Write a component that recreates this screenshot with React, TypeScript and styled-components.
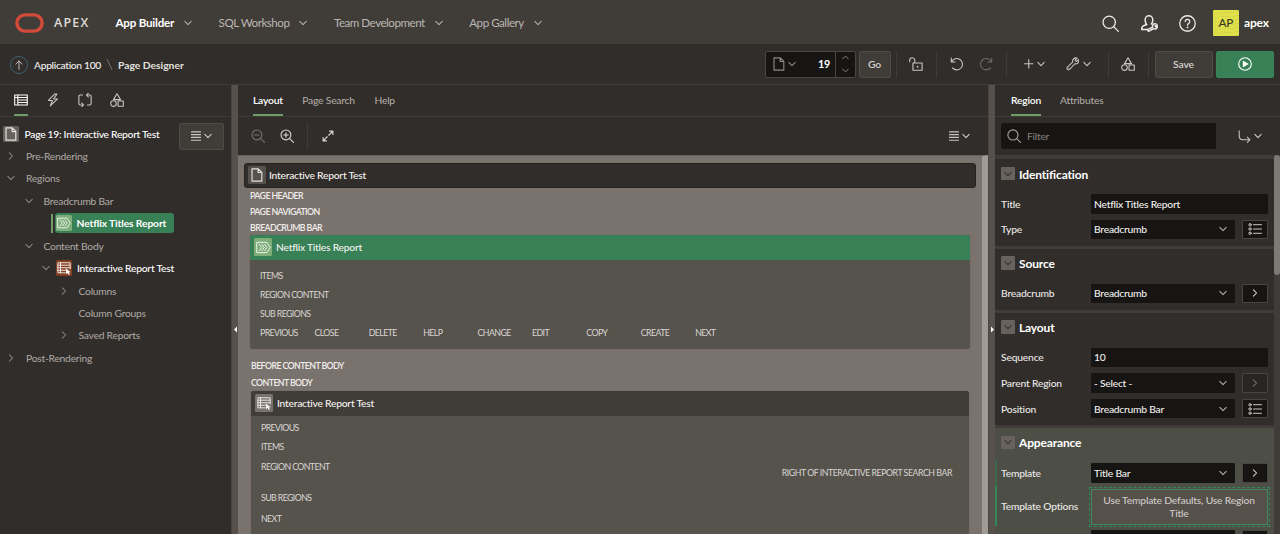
import React from 'react';
import styled, { createGlobalStyle } from 'styled-components';

const GlobalStyle = createGlobalStyle`
  * { box-sizing: border-box; }
  body {
    margin: 0;
    background: #312d2a;
    color: #c9c5c1;
    font-family: Lato, "Open Sans", "Noto Sans", sans-serif;
    font-size: 10.3px;
    letter-spacing: -0.24px;
    line-height: 16px;
    white-space: nowrap;
  }
  svg { display: block; flex: none; }
`;

/* ---------- icons ---------- */

const Glyph = styled.svg<{ $color?: string; $w?: number }>`
  fill: none;
  stroke: ${p => p.$color ?? '#c9c5c1'};
  stroke-width: ${p => p.$w ?? 1.25};
  stroke-linecap: round;
  stroke-linejoin: round;
  .solid { fill: ${p => p.$color ?? '#c9c5c1'}; stroke: none; }
`;

type IconProps = { size?: number; color?: string; w?: number };

const Icon = ({ size = 14, color, w, children }: IconProps & { children: React.ReactNode }) => (
  <Glyph width={size} height={size} viewBox="0 0 16 16" $color={color} $w={w}>
    {children}
  </Glyph>
);

const Chevron = ({ dir = 'down', size = 8, color = '#b3afaa' }: IconProps & { dir?: 'down' | 'up' | 'right' }) => (
  <Glyph width={size} height={size} viewBox="0 0 8 8" $color={color} $w={1.05}>
    <path d={dir === 'down' ? 'M.8 2.4 4 5.6 7.2 2.4' : dir === 'up' ? 'M.8 5.6 4 2.4 7.2 5.6' : 'M2.4.8 5.6 4 2.4 7.2'} />
  </Glyph>
);

const SearchIcon = (p: IconProps) => (
  <Icon {...p}><circle cx="6.8" cy="6.8" r="5.8" /><path d="m11 11 4.4 4.4" /></Icon>
);
const ZoomIcon = ({ plus, ...p }: IconProps & { plus?: boolean }) => (
  <Icon {...p}>
    <circle cx="6.8" cy="6.8" r="5.6" /><path d="m11 11 4.4 4.4M4.2 6.8h5.2" />{plus && <path d="M6.8 4.2v5.2" />}
  </Icon>
);
const UserWrenchIcon = (p: IconProps) => (
  <Icon {...p}>
    <path d="M5.3 9C4.2 8 3.9 6.2 3.9 4.7a3.6 3.9 0 0 1 7.2 0c0 1.4-.3 2.8-1.3 3.7" />
    <path d="M5.3 9 1.9 10.4C1 10.9.6 11.8.6 13.6h5.8" />
    <path d="M15.2 9.600a2.300 2.300 0 0 0-4.200 1.900l-4.300 2c-.8.6 0 2 .9 1.600l4.400-2.200a2.300 2.300 0 0 0 3.400-2.300l-1.800.5-.3-.9z" />
  </Icon>
);
const HelpIcon = (p: IconProps) => (
  <Icon {...p}>
    <circle cx="8" cy="8" r="7.3" /><path d="M5.9 6.2a2.1 2.1 0 1 1 3.3 1.7c-.8.5-1.2.9-1.2 1.7" />
    <circle className="solid" cx="8" cy="11.7" r=".85" />
  </Icon>
);
const PageIcon = (p: IconProps) => (
  <Icon {...p}><path d="M2.3 1h7.2l4 4V15H2.3zM9.3 1.2v4h4" /></Icon>
);
const LockIcon = (p: IconProps) => (
  <Icon {...p}>
    <path d="M4.5 6.8h10.5v8.4H4.5zM6.6 6.6V3.800a2.900 2.900 0 0 0-5.800 0v1.500" /><circle className="solid" cx="9.8" cy="11" r="1" />
  </Icon>
);
const UndoIcon = (p: IconProps) => (
  <Icon {...p}><path d="M1.5 1.3v4.4h4.4M1.9 5.5A6.5 6.5 0 1 1 2.8 12.4" /></Icon>
);
const RedoIcon = (p: IconProps) => (
  <Icon {...p}><path d="M14.5 1.3v4.4h-4.4M14.1 5.5A6.5 6.5 0 1 0 13.2 12.4" /></Icon>
);
const PlusIcon = (p: IconProps) => <Icon {...p}><path d="M8 1v14M1 8h14" /></Icon>;
const WrenchIcon = (p: IconProps) => (
  <Icon {...p}>
    <path d="M13.2 1.3 10.7 3.8l1.5 1.5 2.7-2.2c1 2.8-1.5 5.6-4.5 4.9L4.3 14.6c-1.6 1.5-4.1-.8-2.8-2.5L7.9 6C7.2 2.9 10.2.2 13.2 1.3z" />
    <circle className="solid" cx="3.2" cy="12.9" r=".6" />
  </Icon>
);
const ShapesIcon = (p: IconProps) => (
  <Icon {...p}><path d="M8 .8 12 7.6H4zM9.2 9.2h6v6h-6z" /><circle cx="4" cy="12.1" r="3.2" /></Icon>
);
const RunIcon = (p: IconProps) => (
  <Icon {...p}><circle cx="8" cy="8" r="7.2" /><path className="solid" d="M5.5 4v8L12.2 8z" /></Icon>
);
const TreeIcon = (p: IconProps) => (
  <Icon {...p}><path d="M.8 2.3h14.4v11.4H.8zM.8 5.2h14.4M4.3 2.3v11.4M4.3 8h10.7M4.3 10.9h10.7" /></Icon>
);
const BoltIcon = (p: IconProps) => (
  <Icon {...p}><path d="M9.8 1.3 2.8 8.5h4.6L4.9 14.8l8.3-8H8.6L12.5 1.3z" /></Icon>
);
const LoopIcon = (p: IconProps) => (
  <Icon {...p}>
    <path d="M5.2 2.3H2.6C1.6 2.3 1 2.9 1 3.9v8.2c0 1 .6 1.6 1.6 1.6h3.2M10.8 13.7h2.6c1 0 1.6-.6 1.6-1.6V3.9c0-1-.6-1.6-1.6-1.6h-3.2" />
    <path d="M4.2 11.6l2 2.1-2 2.1M11.8.2l-2 2.1 2 2.1" />
  </Icon>
);
const MenuIcon = ({ color = '#c9c5c1' }: IconProps) => (
  <Glyph width="10" height="10" viewBox="0 0 10 10" $color={color} $w={1.15}>
    <path d="M.5 .8h9M.5 3.6h9M.5 6.4h9M.5 9.2h9" />
  </Glyph>
);
const ExpandIcon = (p: IconProps) => (
  <Icon {...p}><path d="M10 1.5h4.5V6M14.2 1.8 9 7M6 14.5H1.5V10M1.8 14.2 7 9" /></Icon>
);
const GotoIcon = (p: IconProps) => (
  <Icon {...p}><path d="M1.5 1v6.5c0 3 1.5 4.5 4.5 4.5h8.5M11.5 8.8l3.2 3.2-3.2 3.2" /></Icon>
);
const ListIcon = ({ color }: IconProps) => (
  <Glyph width="14" height="12" viewBox="0 0 14 12" $color={color} $w={1}>
    <path d="M5.5 1.7h8M5.5 6h8M5.5 10.3h8" />
    <circle cx="2" cy="1.8" r="1.2" /><circle cx="2" cy="6" r="1.2" /><circle cx="2" cy="10.2" r="1.2" />
  </Glyph>
);
const BreadcrumbIcon = (p: IconProps) => (
  <Icon {...p}><path d="M1.2 2.5h10.3L15.2 8l-3.7 5.5H1.2zM3.5 4.7 6 8l-2.5 3.3M6.3 4.7 8.8 8l-2.5 3.3M9.2 4.7 11.7 8l-2.5 3.3" /></Icon>
);
const ReportIcon = (p: IconProps) => (
  <Icon {...p}>
    <path d="M15 9V2H1v11.5h8.5M1 4.8h14M1 7.7h14M1 10.6h8.5M4 2v11.5" />
    <path className="solid" d="m10 8.2 5.8 4.6-2.2.3 1.1 2.3-1.3.6-1.1-2.3-1.9 1.5z" />
  </Icon>
);

/* ---------- header ---------- */

const Header = styled.header`
  height: 44px;
  padding: 2px 11px 0 15px;
  display: flex;
  align-items: center;
  background: #403c38;
  font-size: 11.6px;
  letter-spacing: -0.48px;
`;
const Brand = styled.span`
  width: 61.5px;
  margin: 0 0 0 10px;
  color: #dedbd7;
  font-family: "Open Sans", sans-serif;
  font-weight: 600;
  font-size: 12.5px;
  letter-spacing: 1.2px;
`;
const Nav = styled.nav`display: flex; flex: 1; align-items: center; gap: 26.5px;`;
const NavItem = styled.a<{ $active?: boolean }>`
  display: flex;
  align-items: center;
  gap: 10px;
  color: ${p => (p.$active ? '#fff' : '#bbb7b2')};
  font-weight: ${p => (p.$active ? 700 : 400)};
  letter-spacing: ${p => (p.$active ? '-0.22px' : 'inherit')};
`;
const HeaderActions = styled.div`display: flex; align-items: center; gap: 21.5px;`;
const Account = styled.div`
  display: flex;
  align-items: center;
  gap: 5px;
  margin-left: -5px;
  color: #fff;
  font-weight: 700;
  font-size: 12px;
  letter-spacing: -0.1px;
`;
const Avatar = styled.span`
  width: 26px;
  height: 26px;
  border-radius: 1px;
  display: grid;
  place-items: center;
  background: repeating-linear-gradient(176deg, #dfe04a 0 3px, #d5d648 3px 4px);
  color: #3a3825;
  font-weight: 500;
  font-size: 11.6px;
`;

/* ---------- toolbar ---------- */

const Toolbar = styled.div`
  height: 41px;
  padding: 0 6.5px 0 10px;
  display: flex;
  align-items: center;
  border-bottom: 1px solid #403c39;
`;
const Crumbs = styled.div`
  display: flex;
  flex: 1;
  align-items: center;
  padding-top: 1px;
  color: #f3f1ef;
  font-weight: 500;
  letter-spacing: -0.33px;
`;
const UpButton = styled.span`
  width: 18px;
  height: 18px;
  margin-right: 6px;
  border: 1px solid #3d6470;
  border-radius: 50%;
  display: grid;
  place-items: center;
`;
const Current = styled.span`color: #e3e0dd; font-weight: 700; letter-spacing: 0;`;
const Slash = styled.svg`margin: 0 5px;`;
const PagePicker = styled.div`
  width: 91px;
  height: 27px;
  display: flex;
  border: 1px solid #4a4642;
  border-radius: 2px;
  background: #161513;
`;
const PickerMain = styled.div`
  width: 70px;
  display: flex;
  align-items: center;
  gap: 2px;
  padding: 0 5px 0 6px;
  border-right: 1px solid #4a4642;
  color: #fff;
  font-weight: 700;
  font-size: 10.8px;
  span { margin-left: auto; }
`;
const Spinner = styled.div`
  flex: 1;
  display: flex;
  flex-direction: column;
  align-items: center;
  justify-content: space-between;
  padding: 2.5px 0;
`;
const Button = styled.button<{ $width: number; $primary?: boolean }>`
  width: ${p => p.$width}px;
  height: 27px;
  padding: 0;
  display: flex;
  align-items: center;
  justify-content: center;
  gap: 3.5px;
  border: 1px solid ${p => (p.$primary ? '#39855a' : '#504b47')};
  border-radius: 2px;
  background: ${p => (p.$primary ? '#388056' : '#403c38')};
  color: #d4d0cc;
  font: inherit;
  font-weight: 600;
  letter-spacing: -0.1px;
`;
const ToolGroup = styled.div<{ $width: number; $gap?: number }>`
  width: ${p => p.$width}px;
  height: 27px;
  display: flex;
  align-items: center;
  justify-content: center;
  gap: ${p => p.$gap ?? 0}px;
  border-left: 1px solid #3f3b37;
`;
const Dropdown = styled.span`display: flex; align-items: center; gap: 3.5px;`;
const PickerButtons = styled.div`display: flex; gap: 2.5px; margin-right: 5px;`;
const EndButtons = styled.div`display: flex; gap: 3px; padding-left: 5.5px; border-left: 1px solid #3f3b37;`;

/* ---------- workspace ---------- */

const Workspace = styled.main`
  height: 449px;
  display: grid;
  grid-template-columns: 231px 7px 750px 7px 285px;
  overflow: hidden;
`;
const Column = styled.section`display: flex; flex-direction: column; min-width: 0; overflow: hidden;`;
const Splitter = styled.div`
  padding-top: 241px;
  display: flex;
  justify-content: center;
  border-left: 1px solid #4a4541;
  background: #56514c;
`;
const TabBar = styled.div<{ $left: number; $gap: number }>`
  height: 32px;
  flex: none;
  display: flex;
  gap: ${p => p.$gap}px;
  padding-left: ${p => p.$left}px;
  border-bottom: 1px solid #3f3b38;
`;
const Tab = styled.div<{ $active?: boolean }>`
  height: 31px;
  padding-top: 1px;
  display: flex;
  align-items: center;
  border-bottom: 2.5px solid ${p => (p.$active ? '#6f9c68' : 'transparent')};
  color: ${p => (p.$active ? '#fff' : '#b5b0ab')};
  font-weight: ${p => (p.$active ? 600 : 400)};
  letter-spacing: -0.2px;
`;

/* ---------- tree ---------- */

const TreeArea = styled.div`
  padding: 5.5px 7px 0 3px;
  display: flex;
  justify-content: space-between;
`;
const TreeRoot = styled.div`
  height: 23px;
  display: flex;
  align-items: center;
  gap: 5.5px;
  color: #fff;
  font-weight: 500;
  letter-spacing: -0.29px;
`;
const Badge = styled.span<{ $bg: string; $size?: number }>`
  width: ${p => p.$size ?? 16}px;
  height: ${p => p.$size ?? 16}px;
  flex: none;
  border-radius: 1.5px;
  display: grid;
  place-items: center;
  background: ${p => p.$bg};
`;
const TreeList = styled.ul`list-style: none; margin: -4.8px 0 0; padding: 0;`;
const TreeRow = styled.li<{ $depth: number; $strong?: boolean }>`
  height: 22.44px;
  padding-left: ${p => 7 + p.$depth * 17.5}px;
  display: flex;
  align-items: center;
  color: ${p => (p.$strong ? '#fff' : '#b0aba6')};
  font-weight: ${p => (p.$strong ? 500 : 400)};
`;
const Toggle = styled.span`width: 8px; margin-right: 11px; flex: none;`;
const TypeBadge = styled.span`display: flex; margin: 0 5px 0 -5px;`;
const Selected = styled.span`
  height: 20px;
  margin-left: -10px;
  display: flex;
  align-items: center;
  &::before { content: ''; width: 2px; height: 19px; margin-right: 2px; background: #6f9c68; }
`;
const SelectedPill = styled.span`
  width: 118.5px;
  height: 19.5px;
  padding-left: 1px;
  display: flex;
  align-items: center;
  gap: 4.5px;
  border-radius: 3px;
  background: #388056;
  color: #fff;
  font-weight: 700;
  letter-spacing: -0.12px;
`;

/* ---------- layout canvas ---------- */

const LayoutTools = styled.div`
  height: 38px;
  flex: none;
  padding: 0 18px 0 13px;
  display: flex;
  align-items: center;
  gap: 15px;
`;
const ToolDivider = styled.span`width: 1px; height: 26px; margin: 0 -1px 0 -2px; background: #403c39;`;
const Push = styled.span`margin-left: auto;`;
const Canvas = styled.div`
  flex: 1;
  padding: 6.5px 6px 0;
  border-top: 1px solid #665f5a;
  border-right: 6px solid #a19b96;
  background: #7a726d;
  overflow: hidden;
  font-weight: 500;
`;
const Bar = styled.div<{ $kind: 'page' | 'selected' | 'plain' }>`
  height: 25px;
  display: flex;
  align-items: center;
  gap: 4px;
  padding-left: 4px;
  color: #f4f2f0;
  border-radius: ${p => (p.$kind === 'page' ? '3px' : '3px 3px 0 0')};
  background: ${p => ({ page: '#312d2a', selected: '#388056', plain: '#403c38' })[p.$kind]};
`;
const PageBar = styled(Bar)`padding-left: 2.5px; gap: 3.5px; border: 1px solid #27231f;`;
const Slots = styled.div`padding: 0 6px; display: flex; flex-direction: column;`;
const Slot = styled.div<{ $h: number }>`
  height: ${p => p.$h}px;
  padding-top: 1px;
  display: flex;
  align-items: center;
  color: #efedeb;
  font-size: 8.8px;
  font-weight: 600;
  letter-spacing: -0.6px;
`;
const BodySlots = styled.div`padding: 8px 1px 0;`;
const Region = styled.div<{ $inset?: number }>`
  margin: 0 ${p => p.$inset ?? 0}px;
  border-radius: 3px;
  background: #56524c;
  box-shadow: 0 0 1px #5d5853;
`;
const RegionBody = styled.div<{ $top: number; $bottom: number }>`
  padding: ${p => p.$top}px 17px ${p => p.$bottom}px 10px;
`;
const Placeholder = styled.div<{ $h: number }>`
  height: ${p => p.$h}px;
  padding-top: 1px;
  display: flex;
  align-items: center;
  justify-content: space-between;
  color: #d9d6d3;
  font-size: 8.8px;
  font-weight: 400;
  letter-spacing: -0.6px;
`;
const SearchBarSlot = styled.span`padding-top: 12px; letter-spacing: -0.48px;`;
const ButtonSlots = styled.div`display: grid; grid-template-columns: repeat(9, 54.4px);`;

/* ---------- property editor ---------- */

const FilterRow = styled.div`
  height: 38px;
  flex: none;
  padding: 0 18px 0 6px;
  display: flex;
  align-items: center;
  justify-content: space-between;
`;
const FilterBox = styled.div`
  width: 215px;
  height: 26px;
  padding-left: 6px;
  display: flex;
  align-items: center;
  gap: 6px;
  border-radius: 2px;
  background: #161513;
  color: #85817c;
`;
const Properties = styled.div`
  flex: 1;
  min-height: 0;
  display: flex;
  background: #403c39;
  overflow: hidden;
`;
const Groups = styled.div`
  width: 279px;
  padding-top: 4px;
  display: flex;
  flex-direction: column;
  gap: 3px;
`;
const Thumb = styled.div`width: 6px; height: 120px; border-radius: 3px; background: #7d7975;`;
const Group = styled.div<{ $tint?: boolean }>`
  flex: none;
  padding-bottom: 6.5px;
  background: ${p => (p.$tint ? '#4d4f47' : '#312d2a')};
`;
const GroupTitle = styled.h3<{ $space: number }>`
  height: 31px;
  margin: 0 0 ${p => p.$space}px;
  padding-left: 6px;
  display: flex;
  align-items: center;
  gap: 4.5px;
  color: #fff;
  font-size: 12px;
  font-weight: 700;
  letter-spacing: -0.14px;
`;
const Collapse = styled.span`
  width: 13.5px;
  height: 13.5px;
  margin-top: -2px;
  border-radius: 1px;
  display: grid;
  place-items: center;
  background: #67625d;
`;
const Fields = styled.div`display: flex; flex-direction: column; gap: 6.1px;`;
const FieldRow = styled.div<{ $marker?: string }>`
  display: flex;
  align-items: center;
  padding-right: 6.5px;
  border-left: 2.5px solid ${p => p.$marker ?? 'transparent'};
`;
const FieldLabel = styled.label`
  width: 93.5px;
  padding-left: 4px;
  flex: none;
  color: #ebe9e6;
  font-weight: 500;
  letter-spacing: -0.19px;
`;
const Input = styled.div<{ $select?: boolean }>`
  width: ${p => (p.$select ? 144.5 : 177)}px;
  height: 19.5px;
  padding: 0 8.5px 0 3.5px;
  display: flex;
  align-items: center;
  justify-content: space-between;
  border-radius: 1px;
  background: #161513;
  color: #f1efed;
  font-weight: 500;
  letter-spacing: -0.24px;
`;
const SideButton = styled.span<{ $disabled?: boolean }>`
  width: 25.5px;
  height: 19.5px;
  margin-left: auto;
  display: grid;
  place-items: center;
  border: 1px solid #4a4541;
  border-radius: 1px;
  background: ${p => (p.$disabled ? '#292522' : '#161513')};
`;
const MarkedRow = styled(FieldRow)<{ $h: number }>`height: ${p => p.$h}px;`;
const OptionsFrame = styled.div`
  width: 181px;
  height: 40px;
  margin: 1px -2px 0;
  padding: 1px;
  border: 1px dashed #35855a;
`;
const OptionsButton = styled.div`
  height: 100%;
  display: grid;
  place-items: center;
  align-content: center;
  border: 1px solid #3f8a60;
  background: #56504b;
  color: #cfcbc7;
  font-weight: 500;
  letter-spacing: -0.19px;
  line-height: 13px;
  text-align: center;
`;

type TreeNode = { label: string; depth: number; open?: boolean; leaf?: boolean; type?: 'selected' | 'report' };
const tree: TreeNode[] = [
  { label: 'Pre-Rendering', depth: 0 },
  { label: 'Regions', depth: 0, open: true },
  { label: 'Breadcrumb Bar', depth: 1, open: true },
  { label: 'Netflix Titles Report', depth: 2, leaf: true, type: 'selected' },
  { label: 'Content Body', depth: 1, open: true },
  { label: 'Interactive Report Test', depth: 2, open: true, type: 'report' },
  { label: 'Columns', depth: 3 },
  { label: 'Column Groups', depth: 3, leaf: true },
  { label: 'Saved Reports', depth: 3 },
  { label: 'Post-Rendering', depth: 0 },
];

const buttonSlots = ['PREVIOUS', 'CLOSE', 'DELETE', 'HELP', 'CHANGE', 'EDIT', 'COPY', 'CREATE', 'NEXT'];

const Field = ({ label, value, side }: { label: string; value: string; side?: 'list' | 'go' | 'off' }) => (
  <FieldRow>
    <FieldLabel>{label}</FieldLabel>
    <Input $select={!!side}>{value}{side && <Chevron size={8} />}</Input>
    {side && (
      <SideButton $disabled={side === 'off'}>
        {side === 'list' ? <ListIcon /> : <Chevron dir="right" color={side === 'off' ? '#77726d' : '#dcd9d6'} />}
      </SideButton>
    )}
  </FieldRow>
);

const Title = ({ children, space = 4 }: { children: string; space?: number }) => (
  <GroupTitle $space={space}><Collapse><Chevron color="#35312e" /></Collapse>{children}</GroupTitle>
);

export default function App() {
  return (
    <>
      <GlobalStyle />
      <Header>
        <svg width="29" height="20" viewBox="0 0 29 20">
          <rect x="1.9" y="1.9" width="25.2" height="16.2" rx="8.1" fill="none" stroke="#d24a38" strokeWidth="3.4" />
        </svg>
        <Brand>APEX</Brand>
        <Nav>
          {['App Builder', 'SQL Workshop', 'Team Development', 'App Gallery'].map((t, i) => (
            <NavItem key={t} $active={i === 0}>{t}<Chevron /></NavItem>
          ))}
        </Nav>
        <HeaderActions>
          <SearchIcon size={17} color="#eceae8" w={1.2} />
          <UserWrenchIcon size={17} color="#eceae8" w={1.4} />
          <HelpIcon size={17} color="#eceae8" w={1.2} />
          <Account><Avatar>AP</Avatar>apex</Account>
        </HeaderActions>
      </Header>

      <Toolbar>
        <Crumbs>
          <UpButton><Icon size={10} w={1.5}><path d="M8 15V1.5M3 6.5l5-5 5 5" /></Icon></UpButton>
          Application 100
          <Slash width="7" height="13" viewBox="0 0 7 13"><path d="M1 1l5 11" stroke="#77726e" fill="none" /></Slash>
          <Current>Page Designer</Current>
        </Crumbs>
        <PickerButtons>
          <PagePicker>
            <PickerMain><PageIcon size={14} color="#8f8b86" /><Chevron color="#8f8b86" /><span>19</span></PickerMain>
            <Spinner><Chevron dir="up" size={7} color="#8f8b86" /><Chevron size={7} color="#8f8b86" /></Spinner>
          </PagePicker>
          <Button $width={32}>Go</Button>
        </PickerButtons>
        <ToolGroup $width={40.5}><LockIcon size={14} /></ToolGroup>
        <ToolGroup $width={70} $gap={15}><UndoIcon size={14} /><RedoIcon size={14} color="#6f6a65" /></ToolGroup>
        <ToolGroup $width={101.5} $gap={20.5}>
          <Dropdown><PlusIcon size={9.5} w={1.8} /><Chevron color="#c9c5c1" /></Dropdown>
          <Dropdown><WrenchIcon size={13.5} /><Chevron color="#c9c5c1" /></Dropdown>
        </ToolGroup>
        <ToolGroup $width={40.5}><ShapesIcon size={14} /></ToolGroup>
        <EndButtons>
          <Button $width={58}>Save</Button>
          <Button $width={58} $primary><RunIcon size={14} color="#fff" w={1.3} /></Button>
        </EndButtons>
      </Toolbar>

      <Workspace>
        <Column>
          <TabBar $left={14} $gap={18}>
            <Tab $active><TreeIcon color="#fff" /></Tab>
            <Tab><BoltIcon /></Tab>
            <Tab><LoopIcon /></Tab>
            <Tab><ShapesIcon /></Tab>
          </TabBar>
          <TreeArea>
            <TreeRoot>
              <Badge $bg="#66615c"><PageIcon size={14} color="#e4e2e0" w={1.4} /></Badge>
              Page 19: Interactive Report Test
            </TreeRoot>
            <Button $width={45}><MenuIcon /><Chevron color="#d4d0cc" /></Button>
          </TreeArea>
          <TreeList>
            {tree.map(n => (
              <TreeRow key={n.label} $depth={n.depth} $strong={!!n.type}>
                <Toggle>{!n.leaf && <Chevron dir={n.open ? 'down' : 'right'} color="#8a8580" />}</Toggle>
                {n.type === 'selected' ? (
                  <Selected>
                    <SelectedPill>
                      <Badge $bg="#7fae7b"><BreadcrumbIcon size={14} color="#f2f7f1" w={1} /></Badge>
                      {n.label}
                    </SelectedPill>
                  </Selected>
                ) : (
                  <>
                    {n.type === 'report' && (
                      <TypeBadge><Badge $bg="#803d20"><ReportIcon size={14} color="#fff" w={1} /></Badge></TypeBadge>
                    )}
                    {n.label}
                  </>
                )}
              </TreeRow>
            ))}
          </TreeList>
        </Column>

        <Splitter><svg width="3" height="7" viewBox="0 0 3 7"><path d="M3 .5v6L0 3.5z" fill="#fff" /></svg></Splitter>

        <Column>
          <TabBar $left={15} $gap={19.5}>
            <Tab $active>Layout</Tab><Tab>Page Search</Tab><Tab>Help</Tab>
          </TabBar>
          <LayoutTools>
            <ZoomIcon color="#77726d" /><ZoomIcon plus color="#dcd9d6" />
            <ToolDivider />
            <ExpandIcon size={12} color="#dcd9d6" w={1.5} />
            <Push><Dropdown><MenuIcon /><Chevron color="#d4d0cc" /></Dropdown></Push>
          </LayoutTools>
          <Canvas>
            <PageBar $kind="page">
              <Badge $bg="#56514c" $size={18}><PageIcon size={14} color="#e4e2e0" w={1.3} /></Badge>
              Interactive Report Test
            </PageBar>
            <Slots>
              <Slot $h={16}>PAGE HEADER</Slot>
              <Slot $h={16}>PAGE NAVIGATION</Slot>
              <Slot $h={15}>BREADCRUMB BAR</Slot>
              <Region>
                <Bar $kind="selected">
                  <Badge $bg="#7fae7b" $size={18}><BreadcrumbIcon size={15} color="#f2f7f1" w={1} /></Badge>
                  Netflix Titles Report
                </Bar>
                <RegionBody $top={6} $bottom={7}>
                  <Placeholder $h={19}>ITEMS</Placeholder>
                  <Placeholder $h={19}>REGION CONTENT</Placeholder>
                  <Placeholder $h={19}>SUB REGIONS</Placeholder>
                  <ButtonSlots>{buttonSlots.map(b => <Placeholder key={b} $h={19}>{b}</Placeholder>)}</ButtonSlots>
                </RegionBody>
              </Region>
              <BodySlots>
                <Slot $h={17}>BEFORE CONTENT BODY</Slot>
                <Slot $h={17}>CONTENT BODY</Slot>
              </BodySlots>
              <Region $inset={1}>
                <Bar $kind="plain">
                  <Badge $bg="#7a726d" $size={18}><ReportIcon size={14} color="#f4f2f0" w={1} /></Badge>
                  Interactive Report Test
                </Bar>
                <RegionBody $top={2} $bottom={20}>
                  <Placeholder $h={19}>PREVIOUS</Placeholder>
                  <Placeholder $h={19}>ITEMS</Placeholder>
                  <Placeholder $h={22}>
                    REGION CONTENT
                    <SearchBarSlot>RIGHT OF INTERACTIVE REPORT SEARCH BAR</SearchBarSlot>
                  </Placeholder>
                  <Placeholder $h={40}>SUB REGIONS</Placeholder>
                  <Placeholder $h={2}>NEXT</Placeholder>
                </RegionBody>
              </Region>
            </Slots>
          </Canvas>
        </Column>

        <Splitter><svg width="3" height="7" viewBox="0 0 3 7"><path d="M0 .5v6l3-3z" fill="#fff" /></svg></Splitter>

        <Column>
          <TabBar $left={16} $gap={19}>
            <Tab $active>Region</Tab><Tab>Attributes</Tab>
          </TabBar>
          <FilterRow>
            <FilterBox><SearchIcon color="#a5a19c" />Filter</FilterBox>
            <Dropdown><GotoIcon size={13} w={1.3} /><Chevron color="#d4d0cc" /></Dropdown>
          </FilterRow>
          <Properties>
            <Groups>
              <Group>
                <Title>Identification</Title>
                <Fields>
                  <Field label="Title" value="Netflix Titles Report" />
                  <Field label="Type" value="Breadcrumb" side="list" />
                </Fields>
              </Group>
              <Group>
                <Title>Source</Title>
                <Fields><Field label="Breadcrumb" value="Breadcrumb" side="go" /></Fields>
              </Group>
              <Group>
                <Title>Layout</Title>
                <Fields>
                  <Field label="Sequence" value="10" />
                  <Field label="Parent Region" value="- Select -" side="off" />
                  <Field label="Position" value="Breadcrumb Bar" side="list" />
                </Fields>
              </Group>
              <Group $tint>
                <Title space={1.5}>Appearance</Title>
                <MarkedRow $h={25.5} $marker="#3d6a4c">
                  <FieldLabel>Template</FieldLabel>
                  <Input $select>Title Bar<Chevron /></Input>
                  <SideButton><Chevron dir="right" color="#dcd9d6" /></SideButton>
                </MarkedRow>
                <MarkedRow $h={40.5} $marker="#35855a">
                  <FieldLabel>Template Options</FieldLabel>
                  <OptionsFrame><OptionsButton>Use Template Defaults, Use Region<br />Title</OptionsButton></OptionsFrame>
                </MarkedRow>
                <MarkedRow $h={27}>
                  <FieldLabel />
                  <Input $select />
                  <SideButton />
                </MarkedRow>
              </Group>
            </Groups>
            <Thumb />
          </Properties>
        </Column>
      </Workspace>
    </>
  );
}
